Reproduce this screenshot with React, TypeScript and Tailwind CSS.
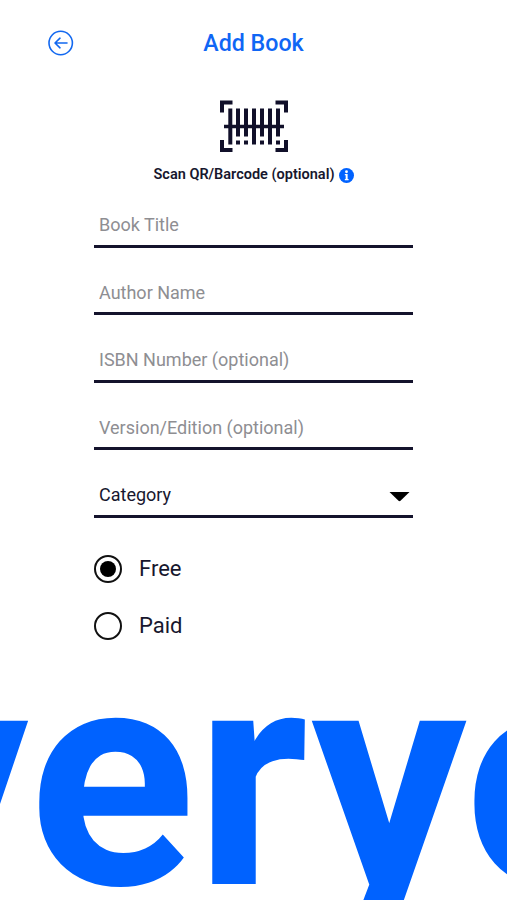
import { useState } from 'react';

const fields = ['Book Title', 'Author Name', 'ISBN Number (optional)', 'Version/Edition (optional)'];

const prices = ['Free', 'Paid'];

function BackIcon() {
  return (
    <svg viewBox="0 0 26 26" className="w-[26px] h-[26px]" fill="none" stroke="#1268f0" strokeWidth="1.6" strokeLinecap="round" strokeLinejoin="round">
      <circle cx="12.7" cy="13" r="11.7" />
      <path d="M19 13H7.3M12 8.2L7 13L12 17.8" />
    </svg>
  );
}

function BarcodeIcon() {
  return (
    <svg viewBox="0 0 68 52" className="w-[68px] h-[52px]" fill="none" stroke="#11102a" strokeWidth="4">
      {/* Corner brackets */}
      <path d="M2 12.5V2.5H12.5M55.5 2.5H66V12.5M66 40V50H55.5M12.5 50H2V40" />
      {/* Scan line */}
      <path d="M4 26.5H64" strokeWidth="3.6" />
      {/* Long bars */}
      <path d="M10.3 8.5V44.5M34 8.5V44.5M50 8.5V44.5" />
      {/* Short bars with a dot underneath */}
      <path d="M18 8.5V36.5M26 8.5V36.5M42 8.5V36.5M58 8.5V36.5" />
      <path d="M18 40.5V44.5M26 40.5V44.5M42 40.5V44.5M58 40.5V44.5" />
    </svg>
  );
}

function InfoIcon() {
  return (
    <svg viewBox="0 0 16 16" className="w-[15px] h-[15px]">
      <circle cx="8" cy="8" r="8" fill="#0062ff" />
      <circle cx="8" cy="4" r="1.5" fill="#fff" />
      <path d="M6.2 6.5H9.2V11.7H10.2V13H6.2V11.7H7.1V7.8H6.2Z" fill="#fff" />
    </svg>
  );
}

export default function App() {
  const [price, setPrice] = useState('Free');

  return (
    <div className="w-[507px] h-[900px] bg-white overflow-hidden flex flex-col font-['Roboto',sans-serif] text-[#17172e]">
      <header className="grid grid-cols-[74px_1fr_74px] items-start pt-[28px] h-[58px] shrink-0">
        <button className="ml-[48px] mt-[2px] w-[26px]" aria-label="Back">
          <BackIcon />
        </button>
        <h1 className="text-center text-[23.2px] leading-[30px] font-medium text-[#0f66f5]">Add Book</h1>
      </header>

      <div className="flex flex-col items-center pt-[42px] shrink-0">
        <BarcodeIcon />
        <div className="flex items-center gap-1 mt-[13px] h-5">
          <span className="text-[14.5px] leading-5 font-semibold">Scan QR/Barcode (optional)</span>
          <InfoIcon />
        </div>
      </div>

      <form className="mx-[94px] w-[319px] mt-[-5px] shrink-0">
        {fields.map((field) => (
          <div key={field} className="h-[67.5px] flex flex-col justify-end border-b-3 border-[#14132c]">
            <input
              placeholder={field}
              className="w-full h-[40px] pl-[5px] text-[18px] outline-none placeholder:text-[#8e8e92]"
            />
          </div>
        ))}
        <div className="h-[67.5px] flex items-end border-b-3 border-[#14132c]">
          <div className="flex-1 h-[40px] flex items-center justify-between pl-[5px] pr-[3px] text-[18px]">
            <span>Category</span>
            <svg viewBox="0 0 21 10" className="w-[21px] h-[10px] mt-1" fill="#000">
              <path d="M0.5 0H20.5L11.5 8.8Q10.5 9.6 9.5 8.8Z" />
            </svg>
          </div>
        </div>

        <div className="flex flex-col gap-[29px] mt-[37px]">
          {prices.map((option) => (
            <button key={option} type="button" onClick={() => setPrice(option)} className="flex items-center h-7">
              <span className="w-7 h-7 rounded-full border-2 border-[#111] flex items-center justify-center">
                {price === option && <span className="w-4 h-4 rounded-full bg-black" />}
              </span>
              <span className="ml-[17px] text-[22px] leading-7">{option}</span>
            </button>
          ))}
        </div>
      </form>

      {/* Oversized tagline running off both edges */}
      <div className="mt-auto h-[220px] overflow-hidden shrink-0">
        <p className="ml-[-126px] whitespace-nowrap text-[309px] leading-[220px] mt-[-12px] font-bold text-[#0062ff]">veryo</p>
      </div>
    </div>
  );
}
